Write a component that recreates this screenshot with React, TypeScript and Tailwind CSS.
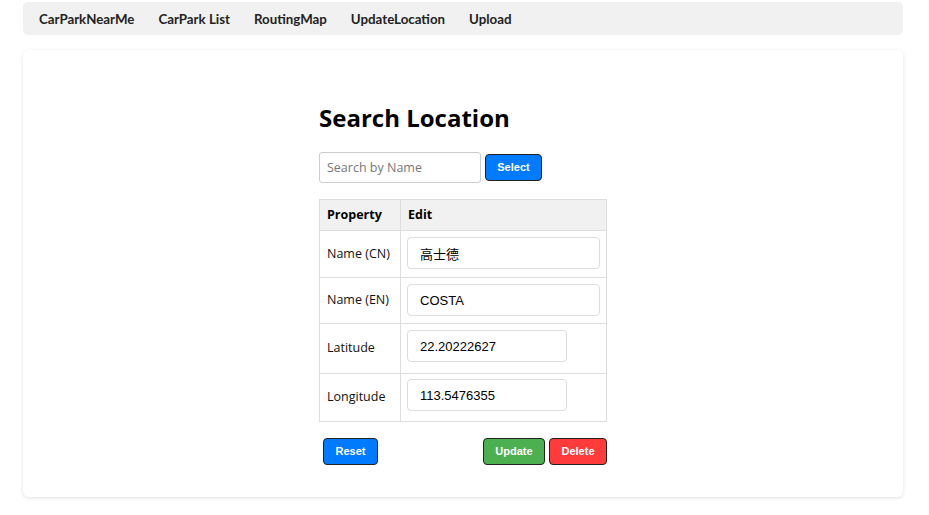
import React from 'react';

const NAV = ['CarParkNearMe', 'CarPark List', 'RoutingMap', 'UpdateLocation', 'Upload'];

const ui = { fontFamily: '"Open Sans", "Noto Sans CJK TC", sans-serif' };
const lato = { fontFamily: 'Lato, "Open Sans", sans-serif' };
const arial = { fontFamily: '"Liberation Sans", Arial, "Noto Sans CJK TC", sans-serif' };

interface RowProps {
  label: string;
  value: string;
  wide?: boolean;
  cls: string;
}

const Row: React.FC<RowProps> = ({ label, value, wide, cls }) => (
  <tr>
    <td className="border border-[#ddd] pl-[7px] text-[12.5px] text-[#111] align-middle">{label}</td>
    <td className={`border border-[#ddd] pl-[6px] ${cls}`}>
      <input
        defaultValue={value}
        style={arial}
        className={`${wide ? 'w-[193px]' : 'w-[160px]'} h-[32px] block border border-[#ddd] rounded-[4px] pl-[12px] text-[13px] text-black outline-none`}
      />
    </td>
  </tr>
);

export default function App() {
  return (
    <div className="w-[929px] h-[515px] bg-white pt-[2px] pl-[23px] pr-[26px]" style={ui}>
      <nav
        style={lato}
        className="h-[33px] bg-[#f1f1f1] rounded-[5px] pl-[16px] pt-[2px] flex items-center gap-[24px] text-[13.3px] font-bold text-[#222]"
      >
        {NAV.map(n => (
          <span key={n}>{n}</span>
        ))}
      </nav>

      <div className="mt-[15px] h-[447px] bg-white rounded-[6px] shadow-[0_1px_4px_rgba(0,0,0,0.12)] pt-[52px]">
        <div className="w-[288px] mx-auto">
          <h2 className="text-[24px] font-bold text-black leading-[32px]">Search Location</h2>

          <div className="mt-[18px] flex items-center gap-[4px]">
            <input
              placeholder="Search by Name"
              className="w-[162px] h-[31px] border border-[#ccc] rounded-[3px] pl-[7px] text-[12.5px] placeholder:text-[#777] outline-none"
            />
            <button
              style={arial}
              className="w-[57px] h-[27px] bg-[#007bff] border border-[#222] rounded-[4px] text-white text-[11px] font-bold"
            >
              Select
            </button>
          </div>

          <table className="mt-[16px] w-[288px] border-collapse">
            <colgroup>
              <col className="w-[81px]" />
              <col />
            </colgroup>
            <thead>
              <tr className="bg-[#f1f1f1] h-[31px] text-left text-[12.5px] font-bold text-black">
                <th className="border border-[#ddd] pl-[7px]">Property</th>
                <th className="border border-[#ddd] pl-[7px]">Edit</th>
              </tr>
            </thead>
            <tbody>
              <Row label="Name (CN)" value="高士德" wide cls="pt-[6px] pb-[8px]" />
              <Row label="Name (EN)" value="COSTA" wide cls="pt-[6px] pb-[7px]" />
              <Row label="Latitude" value="22.20222627" cls="pt-[6px] pb-[11px]" />
              <Row label="Longitude" value="113.5476355" cls="pt-[5px] pb-[10px]" />
            </tbody>
          </table>

          <div className="mt-[16px] flex items-center justify-between" style={arial}>
            <button className="ml-[4px] w-[55px] h-[27px] bg-[#007bff] border border-[#222] rounded-[4px] text-white text-[11px] font-bold">
              Reset
            </button>
            <div className="flex gap-[4px]">
              <button className="w-[62px] h-[27px] bg-[#4caf50] border border-[#222] rounded-[4px] text-white text-[11px] font-bold">
                Update
              </button>
              <button className="w-[58px] h-[27px] bg-[#ff3b3b] border border-[#222] rounded-[4px] text-white text-[11px] font-bold">
                Delete
              </button>
            </div>
          </div>
        </div>
      </div>
    </div>
  );
}
